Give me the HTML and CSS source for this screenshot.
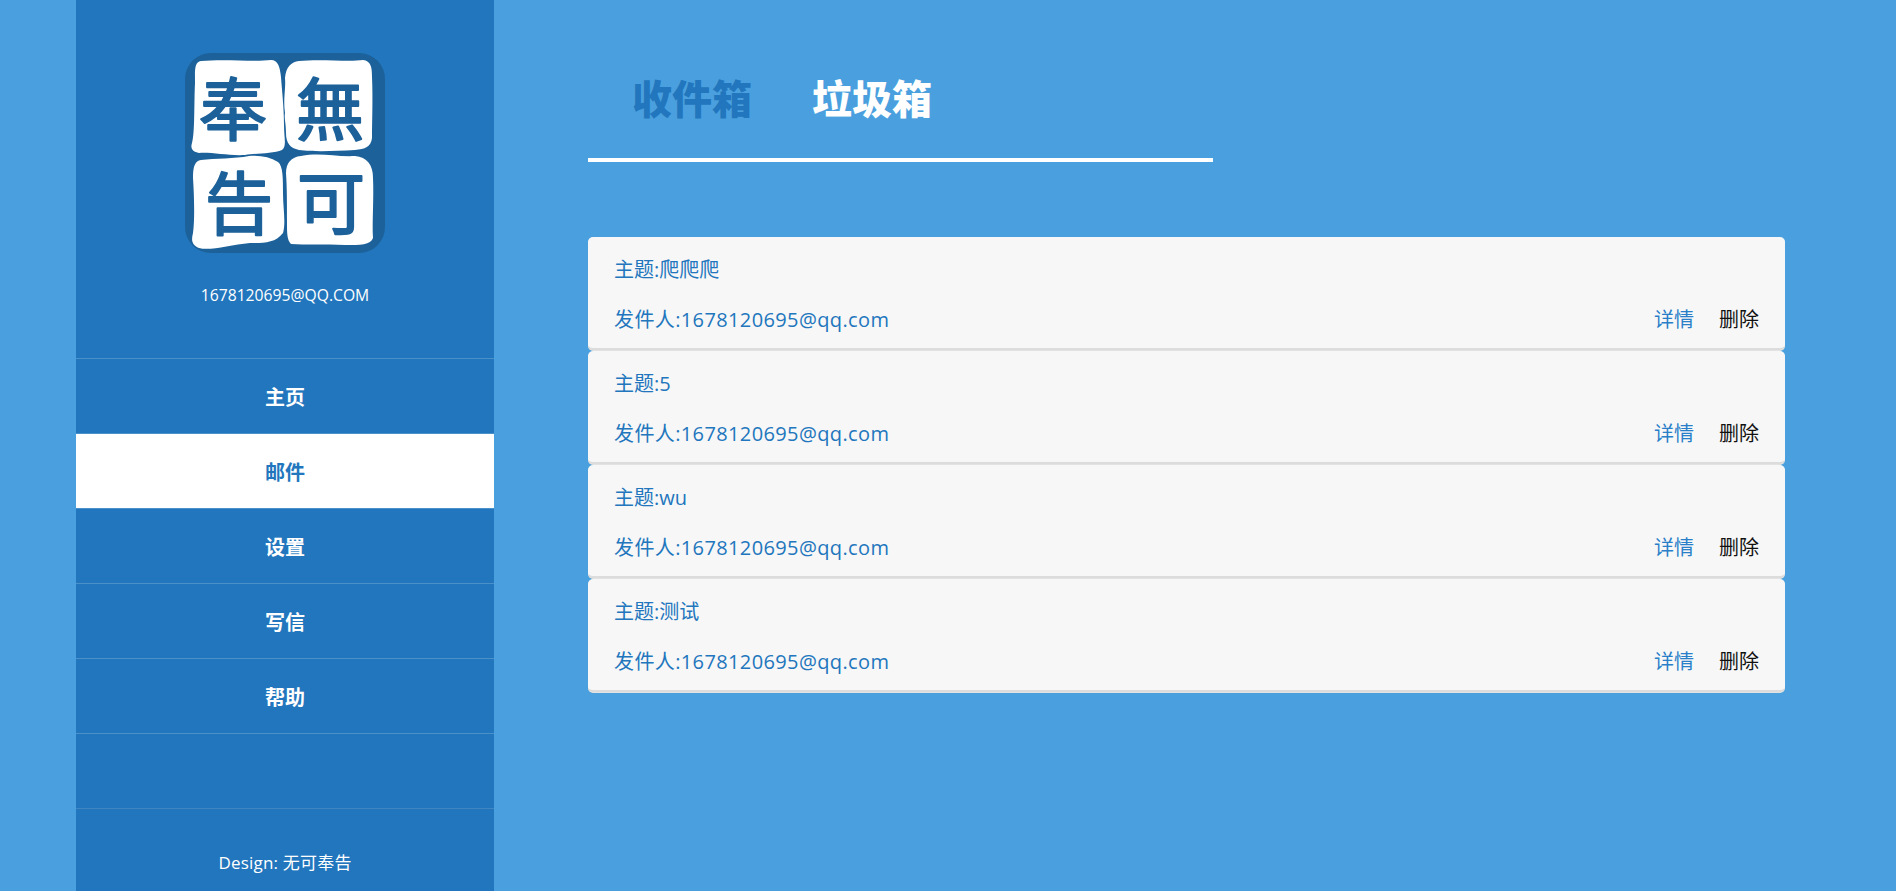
FILE: index.html
```html
<!DOCTYPE html>
<html lang="zh">
<head>
<meta charset="utf-8">
<title>邮件</title>
<link rel="stylesheet" href="styles.css">
</head>
<body>
<div class="page">
  <aside class="sidebar">
    <div class="profile">
      <svg class="logo" viewBox="0 0 200 200" width="200" height="200">
        <rect width="200" height="200" rx="26" fill="#1c6199"/>
        <path class="tile" d="M16 8 C40 6 70 9 86 7 C93 7 95 14 96 24 C97 38 99 55 99 72 C99 85 102 93 97 97 C88 101 70 100 60 102 C44 103 26 99 14 100 C8 99 5 96 7 90 C10 80 9 50 10 30 C10 18 9 9 16 8Z"/>
        <path class="tile" d="M114 8 C135 6 165 9 178 7 C186 8 187 14 187 24 C188 45 187 70 187 85 C186 94 180 96 170 97 C150 98 130 99 114 97 C105 95 101 90 101 80 C101 70 99 65 100 60 C98 45 101 35 100 25 C101 14 106 9 114 8Z"/>
        <path class="tile" d="M16 107 C30 105 50 106 64 103 C75 102 85 104 93 109 C98 113 98 125 98 140 C98 155 101 170 98 180 C90 190 80 190 65 190 C45 192 25 198 14 195 C7 192 6 188 8 180 C10 165 9 140 8 125 C8 113 10 108 16 107Z"/>
        <path class="tile" d="M116 103 C135 99 150 104 170 103 C182 104 188 112 188 125 C189 145 187 170 188 185 C186 192 175 192 160 192 C140 191 120 192 106 191 C102 187 102 180 102 170 C102 150 102 135 101 120 C101 110 106 104 116 103Z"/>
        <text class="seal" x="145" y="82">無</text>
        <text class="seal" x="48" y="82">奉</text>
        <text class="seal" x="54" y="176">告</text>
        <text class="seal" x="146" y="176">可</text>
      </svg>
      <p class="email">1678120695@QQ.COM</p>
    </div>
    <nav class="nav">
      <a class="nav-item">主页</a>
      <a class="nav-item active">邮件</a>
      <a class="nav-item">设置</a>
      <a class="nav-item">写信</a>
      <a class="nav-item">帮助</a>
      <a class="nav-item blank"></a>
    </nav>
    <footer class="design">Design: 无可奉告</footer>
  </aside>
  <main class="main">
    <div class="tabs">
      <span class="tab current">收件箱</span>
      <span class="tab">垃圾箱</span>
    </div>
    <ul class="list">
      <li class="card">
        <div class="row">主题:爬爬爬</div>
        <div class="row"><span class="sender">发件人:1678120695@qq.com</span><span class="actions"><a class="detail">详情</a><a class="delete">删除</a></span></div>
      </li>
      <li class="card">
        <div class="row">主题:5</div>
        <div class="row"><span class="sender">发件人:1678120695@qq.com</span><span class="actions"><a class="detail">详情</a><a class="delete">删除</a></span></div>
      </li>
      <li class="card">
        <div class="row">主题:wu</div>
        <div class="row"><span class="sender">发件人:1678120695@qq.com</span><span class="actions"><a class="detail">详情</a><a class="delete">删除</a></span></div>
      </li>
      <li class="card">
        <div class="row">主题:测试</div>
        <div class="row"><span class="sender">发件人:1678120695@qq.com</span><span class="actions"><a class="detail">详情</a><a class="delete">删除</a></span></div>
      </li>
    </ul>
  </main>
</div>
</body>
</html>
```
FILE: styles.css
```css
* { box-sizing: border-box; }
html, body { margin: 0; height: 100%; overflow: hidden; }
body {
  background: #4aa0de;
  color: #fff;
  font-family: "Open Sans", "Noto Sans CJK SC", sans-serif;
}
.page {
  display: flex;
  height: 891px;
  padding-left: 76px;
}
.sidebar {
  width: 418px;
  background: #2276bd;
  display: flex;
  flex-direction: column;
}
.profile {
  height: 358px;
  padding-top: 53px;
  display: flex;
  flex-direction: column;
  align-items: center;
}
.logo { display: block; }
.tile { fill: #fff; }
.seal {
  fill: #1c6199;
  stroke: #1c6199;
  stroke-width: 2px;
  stroke-linejoin: round;
  font-family: "Noto Sans CJK SC", sans-serif;
  font-size: 68px;
  font-weight: 400;
  text-anchor: middle;
}
.email {
  margin: 31px 0 0;
  font-size: 15.7px;
  line-height: 22px;
}
.nav { display: flex; flex-direction: column; }
.nav-item {
  height: 75px;
  border-top: 1px solid #4a90c9;
  display: flex;
  align-items: center;
  justify-content: center;
  font-size: 20px;
  font-weight: 700;
  color: #fff;
}
.nav-item.active { background: #fff; color: #2276bd; }
.nav-item.blank { border-bottom: 1px solid #3f86c3; height: 76px; }
.design {
  margin-top: 43px;
  text-align: center;
  font-size: 17px;
  letter-spacing: .2px;
  line-height: 22px;
}
.main {
  padding: 0 0 0 94px;
  width: 1291px;
}
.tabs {
  width: 625px;
  height: 162px;
  padding: 69px 0 0 44px;
  border-bottom: 4px solid #fff;
  display: flex;
  gap: 60px;
}
.tab {
  font-size: 40px;
  font-weight: 900;
  line-height: 60px;
  height: 60px;
}
.tab.current { color: #2276bd; }
.list {
  list-style: none;
  margin: 75px 0 0;
  padding: 0;
}
.card {
  height: 113px;
  margin-bottom: 1px;
  padding: 11px 26px 0 26px;
  background: #f7f7f7;
  border-radius: 5px;
  border-bottom: 2px solid #dcdcdc;
  box-shadow: 0 1px 0 #e2e2e2;
  color: #2276bd;
  font-size: 20px;
}
.row {
  display: flex;
  justify-content: space-between;
  align-items: center;
  height: 40px;
  margin-bottom: 10px;
}
.sender { letter-spacing: .38px; }
.actions { display: flex; gap: 25px; letter-spacing: 0; }
.detail { color: #2a7fc9; }
.delete { color: #111; }
```
